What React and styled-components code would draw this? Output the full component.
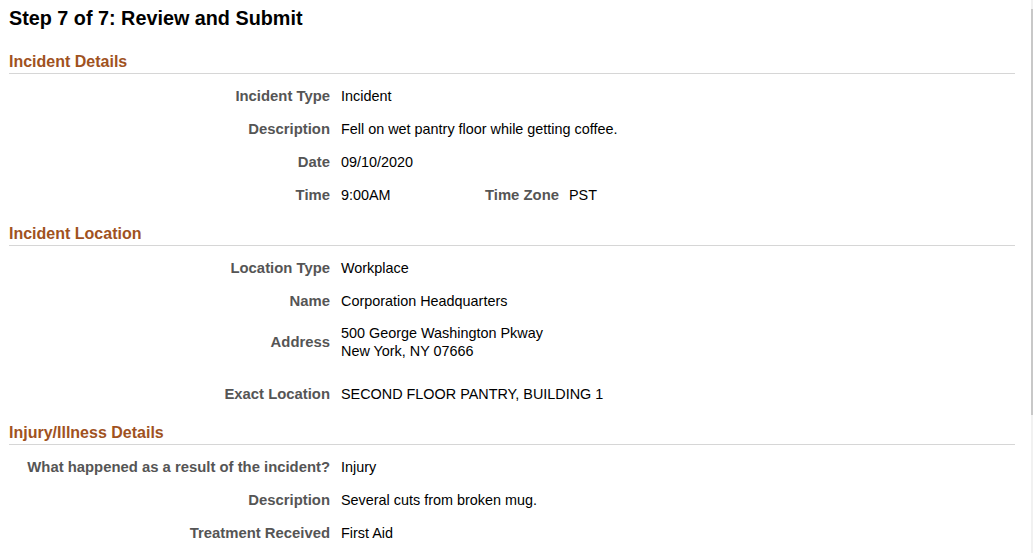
import React from "react";
import styled, { createGlobalStyle } from "styled-components";

const sections = [
  {
    title: "Incident Details",
    rows: [
      { label: "Incident Type", value: "Incident" },
      { label: "Description", value: "Fell on wet pantry floor while getting coffee." },
      { label: "Date", value: "09/10/2020" },
      { label: "Time", value: "9:00AM", extra: { label: "Time Zone", value: "PST" } },
    ],
  },
  {
    title: "Incident Location",
    rows: [
      { label: "Location Type", value: "Workplace" },
      { label: "Name", value: "Corporation Headquarters" },
      { label: "Address", value: ["500 George Washington Pkway", "New York, NY 07666"] },
      { label: "Exact Location", value: "SECOND FLOOR PANTRY, BUILDING 1", spaced: true },
    ],
  },
  {
    title: "Injury/Illness Details",
    rows: [
      { label: "What happened as a result of the incident?", value: "Injury" },
      { label: "Description", value: "Several cuts from broken mug." },
      { label: "Treatment Received", value: "First Aid" },
    ],
  },
];

const App = () => {
  return (
    <>
      <GlobalStyle />
      <Page>
        <Title>Step 7 of 7: Review and Submit</Title>
        {sections.map((section, i) => (
          <Section key={section.title} first={i === 0}>
            <SectionHeader>{section.title}</SectionHeader>
            <RowList>
              {section.rows.map((row) => (
                <Row key={row.label} spaced={row.spaced}>
                  <Label>{row.label}</Label>
                  {row.extra ? (
                    <Inline>
                      <Value width="144px">{row.value}</Value>
                      <Label>{row.extra.label}</Label>
                      <Value indent>{row.extra.value}</Value>
                    </Inline>
                  ) : Array.isArray(row.value) ? (
                    <Value>
                      {row.value.map((line) => (
                        <div key={line}>{line}</div>
                      ))}
                    </Value>
                  ) : (
                    <Value>{row.value}</Value>
                  )}
                </Row>
              ))}
            </RowList>
          </Section>
        ))}
      </Page>
      <ScrollTrack>
        <ScrollThumb />
      </ScrollTrack>
    </>
  );
};

const GlobalStyle = createGlobalStyle`
  html, body {
    margin: 0;
    padding: 0;
    background: #ffffff;
    overflow: hidden;
  }
  body {
    font-family: "Liberation Sans", Arial, sans-serif;
    color: #000;
  }
`;

const Page = styled.div`
  padding: 6px 18px 0 9px;
`;

const Title = styled.h1`
  margin: 0;
  font-size: 19.8px;
  line-height: 24px;
  font-weight: bold;
  color: #000;
`;

const Section = styled.section`
  margin-top: ${(p) => (p.first ? "21px" : "11.5px")};
`;

const SectionHeader = styled.h2`
  margin: 0;
  font-size: 16px;
  line-height: 22px;
  font-weight: bold;
  color: #a0521e;
  border-bottom: 1px solid #d6d6d6;
`;

const RowList = styled.div`
  padding-top: 5.5px;
`;

const Row = styled.div`
  display: grid;
  grid-template-columns: 321px 1fr;
  column-gap: 11px;
  align-items: center;
  min-height: 33px;
  box-sizing: border-box;
  padding: 6px 0;
  margin-top: ${(p) => (p.spaced ? "11.5px" : "0")};
  font-size: 14.4px;
  line-height: 18px;
`;

const Label = styled.div`
  text-align: right;
  font-size: 14.85px;
  font-weight: bold;
  color: #555555;
  white-space: nowrap;
`;

const Value = styled.div`
  color: #000;
  width: ${(p) => p.width || "auto"};
  margin-left: ${(p) => (p.indent ? "10px" : "0")};
`;

const Inline = styled.div`
  display: flex;
  align-items: center;
`;

const ScrollTrack = styled.div`
  position: fixed;
  top: 0;
  right: 0;
  width: 2px;
  height: 100%;
  background: #f1f1f1;
`;

const ScrollThumb = styled.div`
  margin-top: 9px;
  height: 406px;
  background: #c8c8c8;
`;

export default App;
